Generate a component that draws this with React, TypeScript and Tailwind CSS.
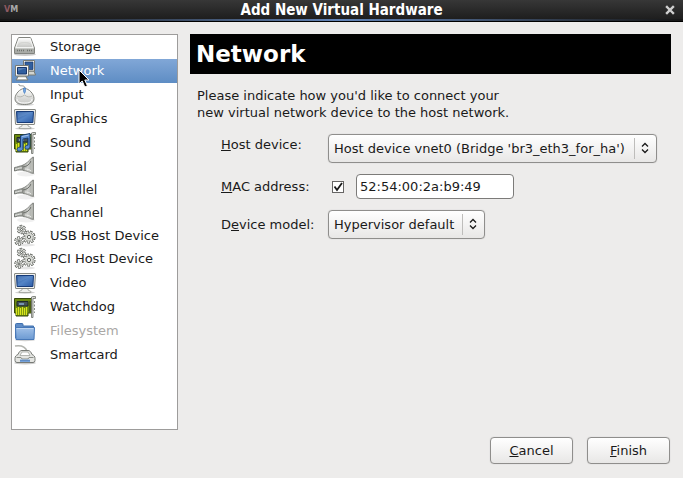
import type { ReactNode } from "react";
import { clsx } from "clsx";

function Icon({ children }: { children: ReactNode }) {
  return (
    <svg viewBox="0 0 22 22" className="h-[22px] w-[22px] shrink-0 overflow-visible" aria-hidden="true">
      {children}
    </svg>
  );
}

function Gradients() {
  return (
    <svg className="absolute h-0 w-0" aria-hidden="true">
      <defs>
        <linearGradient id="metal" x1="0" y1="0" x2="0" y2="1">
          <stop offset="0" stopColor="#fcfcfb" />
          <stop offset="1" stopColor="#c4c5c2" />
        </linearGradient>
        <linearGradient id="screen" x1="0" y1="0" x2="1" y2="1">
          <stop offset="0" stopColor="#2a569b" />
          <stop offset="0.5" stopColor="#5585c6" />
          <stop offset="1" stopColor="#2c5ba6" />
        </linearGradient>
        <linearGradient id="plug" x1="0" y1="0" x2="1" y2="0">
          <stop offset="0" stopColor="#8f918c" />
          <stop offset="0.5" stopColor="#cfd0cd" />
          <stop offset="1" stopColor="#9b9d98" />
        </linearGradient>
        <linearGradient id="folder" x1="0" y1="0" x2="0" y2="1">
          <stop offset="0" stopColor="#a0c0e8" />
          <stop offset="1" stopColor="#6c9ad2" />
        </linearGradient>
      </defs>
    </svg>
  );
}

function DriveIcon() {
  return (
    <Icon>
      <ellipse cx="11" cy="18.5" rx="11" ry="1.5" fill="#000" opacity="0.2" />
      <path d="M4 2.500q.3-1 1-1h11q.7 0 1 1L20.500 12v5.500H.5V12z" fill="#e6e7e4" stroke="#82847f" />
      <path d="M5 2.500h11.200l2.800 9H2z" fill="url(#metal)" stroke="#fff" strokeWidth="0.7" />
      <path d="M4.500 10c0-3 3-3.500 6-3.500s6.500.5 6.500 3.500" fill="none" stroke="#d1d2cf" />
      <path d="M1 12.500h19V17H1z" fill="#a9aba7" />
      <path d="M3 14.500h8M13 14.500h5" stroke="#70736e" strokeWidth="1.500" strokeDasharray="1 1" />
    </Icon>
  );
}

function NetworkIcon() {
  return (
    <Icon>
      <path d="M14 11h6l1.500 4H14z" fill="#d3d5d0" stroke="#777a74" />
      <path d="M9.500.5h11v10.500h-11z" fill="#f2f2ef" stroke="#777a74" />
      <path d="M11 2h8v7.500h-8z" fill="#315f9f" stroke="#17366b" strokeWidth="0.7" />
      <path d="M4.500 16h7l2.500 4H2z" fill="#e5e6e2" stroke="#777a74" />
      <path d="M1.500 5.500h13v10.500h-13z" fill="#f5f5f2" stroke="#777a74" />
      <path d="M3.500 7.500h9v6.500h-9z" fill="#315f9f" stroke="#17366b" />
      <path d="M4 8h8L4 11z" fill="#7096c8" opacity="0.6" />
      <path d="M4 18.500h8" stroke="#fff" />
    </Icon>
  );
}

function MouseIcon() {
  return (
    <Icon>
      <ellipse cx="11" cy="20.500" rx="9" ry="1.500" fill="#000" opacity="0.15" />
      <path d="M5 0c-1 3.500 5.500 0 6 4" fill="none" stroke="#8c8e89" />
      <path
        d="M10.500 4.500C6 4.500 1 10 1 14.500c0 4.500 3.500 6 9.500 6s9.500-1.500 9.500-6c0-4.500-5-10-9.500-10z"
        fill="url(#metal)"
        stroke="#82847f"
      />
      <path d="M3 12c2.500 1.500 5 1 7.500-1 2.500 2 5 2.500 7.500 1" fill="none" stroke="#a9aba6" strokeWidth="0.800" />
      <path d="M3 15c0 3 3 4 7.500 4s7.500-1 7.500-4" fill="none" stroke="#fff" />
      <path d="M9.500 4h2v3.500l-1 2-1-2z" fill="#70a2e0" stroke="#4079bd" strokeWidth="0.600" />
    </Icon>
  );
}

function MonitorIcon() {
  return (
    <Icon>
      <ellipse cx="11" cy="20.500" rx="10" ry="1.200" fill="#000" opacity="0.18" />
      <path d="M8 16h6v2l3 1.500v1H5v-1L8 18z" fill="#eeefec" stroke="#9b9d98" strokeWidth="0.8" />
      <path d="M1 1.500h20q.5 0 .5.5l-1 14q0 .5-.5.5H2q-.5 0-.5-.5L.5 2q0-.5.5-.5z" fill="#f2f2ef" stroke="#858782" />
      <path d="M2.500 3.500h17l-.6 11H3.100z" fill="url(#screen)" stroke="#173b78" />
      <path d="M3.500 4.300h15L4 10z" fill="#7ba2d8" opacity="0.35" />
    </Icon>
  );
}

function CardBody() {
  return (
    <>
      <path d="M.5 2.500h17v14.500H14v3H2v-3H.5z" fill="#6c8a10" stroke="#37480b" />
      <path d="M2.500 12v7M4.500 11v8M6.500 12v7M8.500 11v8M10.500 12v7M12.500 11v8" stroke="#d9e51d" strokeWidth="1.200" />
      <path d="M3 5.500h11v4.500H3z" fill="#465457" stroke="#1e292b" />
      <path d="M5 7h5v2H5z" fill="#7695b3" />
      <path d="M15 5h2v11h-2z" fill="#4b5f12" />
      <path d="M17.500 1v20.500h1.500V2.500h2.500V.5h-3z" fill="#d6d8d3" stroke="#6b6e68" strokeWidth="0.8" />
      <path d="M20.500 5v12" stroke="#888b85" strokeDasharray="2 1.500" />
    </>
  );
}

function WatchdogIcon() {
  return (
    <Icon>
      <CardBody />
    </Icon>
  );
}

function SoundIcon() {
  return (
    <Icon>
      <CardBody />
      <path
        d="M6.500 3.500l9.500-2v13c0 3-5 3.700-5 1 0-2 2-2.600 3-2.300V6l-5 1v9.500c0 3-6 3.700-6 1 0-2 2.500-2.600 3.500-2.300z"
        fill="#5b8dd0"
        stroke="#1c3f73"
      />
      <path d="M8 4.500l6.500-1.300" stroke="#a8c5ea" />
    </Icon>
  );
}

function PlugIcon() {
  return (
    <Icon>
      <ellipse cx="12" cy="18" rx="9" ry="2.500" fill="#000" opacity="0.06" />
      <path d="M.5 11.500c3-.2 5-2 8.500-1.800l2 4.300c-4 .3-6-.6-10.500 1z" fill="#a7aaa5" stroke="#656863" strokeWidth="0.800" />
      <path d="M1 13.300c4-.8 5-1.600 8-1.600" stroke="#e5e6e3" fill="none" />
      <path d="M8 9.500c4-1.500 7-4.500 10-8l1.500-.5v16.500L17 17c-2-1-4-2-8-2.500z" fill="url(#plug)" stroke="#7b7e78" strokeWidth="0.800" />
      <path d="M9 11c4-.5 6.500-2.500 8-6" fill="none" stroke="#6b6e69" />
      <path d="M11 13c2.500 0 4.500.5 6 2" fill="none" stroke="#ecedea" />
      <path d="M18 3v13" stroke="#c6c8c3" />
    </Icon>
  );
}

function Gear({ x, y, r, teeth }: { x: number; y: number; r: number; teeth: number }) {
  const ring = { cx: x, cy: y, r, fill: "none", pathLength: teeth * 2 };

  return (
    <g>
      <circle {...ring} stroke="#555852" strokeWidth="3.400" strokeDasharray="1.400 0.600" />
      <circle cx={x} cy={y} r={r - 0.5} fill="#d9dbd6" stroke="#6c6f69" strokeWidth="0.800" />
      <circle {...ring} stroke="#f0f1ee" strokeWidth="2" strokeDasharray="0.800 1.200" strokeDashoffset="-0.300" />
      <circle cx={x} cy={y} r={r / 3} fill="#fff" stroke="#3f423c" strokeWidth="0.800" />
    </g>
  );
}

function GearsIcon() {
  return (
    <Icon>
      <ellipse cx="12" cy="20" rx="9" ry="1.500" fill="#000" opacity="0.1" />
      <Gear x={7.5} y={4.5} r={3} teeth={6} />
      <Gear x={5} y={16} r={3} teeth={6} />
      <Gear x={15} y={12} r={4.8} teeth={9} />
    </Icon>
  );
}

function FolderIcon() {
  return (
    <Icon>
      <ellipse cx="11" cy="20" rx="10" ry="1.200" fill="#000" opacity="0.18" />
      <path d="M1.500 18V4.500q0-1 1-1H8q1 0 1 1V6h10.500v12z" fill="#5f8cc6" stroke="#3f70af" />
      <path d="M1.500 7.500h19L20 19.500H2z" fill="url(#folder)" stroke="#4778b8" />
      <path d="M2.700 8.500h16.600" stroke="#c1d7f1" />
    </Icon>
  );
}

function SmartcardIcon() {
  return (
    <Icon>
      <ellipse cx="11" cy="19" rx="11" ry="1.500" fill="#000" opacity="0.2" />
      <path d="M1 2c6-1 10 0 12 5" fill="none" stroke="#b2b4af" strokeWidth="1.600" />
      <path
        d="M8 6.500h6c2 0 3 1.500 4 4 2 .8 3 2 3 4v2q0 2-2 2H3q-2 0-2-2v-2c0-2 1-3.200 3-4 1-2.500 2-4 4-4z"
        fill="#e4e5e2"
        stroke="#777a75"
      />
      <path d="M8 8h6l2 3.500H6z" fill="#fff" stroke="#999c96" strokeWidth="0.7" />
      <path d="M2.500 13.500H7l1 1.500h6l1-1.500h4.500" fill="none" stroke="#8b8e89" />
      <path d="M6 15.500h10v2.500H6z" fill="#80abe0" />
      <path d="M6.500 16.700h9" stroke="#335f9c" strokeDasharray="1 1" />
    </Icon>
  );
}

type Device = {
  name: string;
  icon: () => ReactNode;
  compact?: boolean;
  disabled?: boolean;
};

const devices: Device[] = [
  { name: "Storage", icon: DriveIcon },
  { name: "Network", icon: NetworkIcon },
  { name: "Input", icon: MouseIcon },
  { name: "Graphics", icon: MonitorIcon },
  { name: "Sound", icon: SoundIcon },
  { name: "Serial", icon: PlugIcon, compact: true },
  { name: "Parallel", icon: PlugIcon, compact: true },
  { name: "Channel", icon: PlugIcon, compact: true },
  { name: "USB Host Device", icon: GearsIcon, compact: true },
  { name: "PCI Host Device", icon: GearsIcon },
  { name: "Video", icon: MonitorIcon },
  { name: "Watchdog", icon: WatchdogIcon },
  { name: "Filesystem", icon: FolderIcon, disabled: true },
  { name: "Smartcard", icon: SmartcardIcon },
];

function Pointer() {
  return (
    <svg viewBox="0 0 12 19" className="absolute top-2.5 left-[66px] z-10 h-[19px] w-3" aria-hidden="true">
      <path d="M1 1v14l3.200-3 2.600 6 2.600-1.200L6.800 11H11z" fill="#000" stroke="#fff" />
    </svg>
  );
}

function DeviceList() {
  const selected = "Network";

  return (
    <ul className="w-[167px] shrink-0 border border-[#9d9c9b] bg-white">
      {devices.map(({ name, icon: DeviceIcon, compact, disabled }) => (
        <li key={name} className="relative">
          <button
            type="button"
            disabled={disabled}
            className={clsx(
              "flex w-full items-center gap-3.5 pl-0.5 text-left leading-[18px] whitespace-nowrap",
              compact ? "h-[23px]" : "h-6",
              name === selected && "bg-linear-to-b from-[#81a7d7] to-[#5e8dc4] text-white",
              disabled && "text-[#aaa8a6]"
            )}
          >
            <DeviceIcon />
            {name}
          </button>
          {name === selected && <Pointer />}
        </li>
      ))}
    </ul>
  );
}

function ComboBox({ id, value, className }: { id: string; value: string; className: string }) {
  return (
    <div className={clsx("relative h-[29px] max-w-full", className)}>
      <select
        id={id}
        className="h-full w-full appearance-none rounded border border-[#8f8e8c] bg-linear-to-b from-white to-[#e8e7e6] pr-6 pl-[5px] shadow-[0_0_1px_#b5b4b2]"
      >
        <option>{value}</option>
      </select>
      <span className="pointer-events-none absolute top-1 right-[22px] bottom-1 w-px bg-[#bebdbb]" />
      <svg viewBox="0 0 8 12" className="pointer-events-none absolute top-2 right-2 h-3 w-2" aria-hidden="true">
        <path d="M1 4.500l3-3 3 3M1 7.500l3 3 3-3" fill="none" stroke="#1a1a1a" strokeWidth="1.300" />
      </svg>
    </div>
  );
}

function NetworkForm() {
  return (
    <form className="grid grid-cols-[107px_1fr] items-center gap-y-[11px] pt-[13px] pl-[31px]">
      <label htmlFor="host-device" className="self-start pt-0.5">
        <u>H</u>ost device:
      </label>
      <ComboBox id="host-device" value="Host device vnet0 (Bridge 'br3_eth3_for_ha')" className="w-[329px]" />

      <label htmlFor="mac-address">
        <u>M</u>AC address:
      </label>
      <div className="flex items-center gap-3 pl-1">
        <span className="relative flex">
          <input
            type="checkbox"
            defaultChecked
            aria-label="Set MAC address"
            className="peer h-3 w-3 appearance-none border border-[#666564] bg-white"
          />
          <svg
            viewBox="0 0 12 12"
            className="pointer-events-none absolute inset-0 hidden h-3 w-3 peer-checked:block"
            aria-hidden="true"
          >
            <path d="M2.500 5.500l2.500 3.500 5-7" fill="none" stroke="#1a1a1a" strokeWidth="1.800" />
          </svg>
        </span>
        <input
          id="mac-address"
          type="text"
          defaultValue="52:54:00:2a:b9:49"
          className="h-[25px] w-[158px] rounded border border-[#7c7b79] bg-white px-[3px]"
        />
      </div>

      <label htmlFor="device-model">
        D<u>e</u>vice model:
      </label>
      <ComboBox id="device-model" value="Hypervisor default" className="w-[157px]" />
    </form>
  );
}

function DialogButton({ children }: { children: ReactNode }) {
  return (
    <button
      type="button"
      className="h-[27px] w-[83px] rounded border border-[#8f8e8c] bg-linear-to-b from-white to-[#e8e7e6] shadow-[0_0_1px_#b5b4b2]"
    >
      {children}
    </button>
  );
}

function TitleBar() {
  return (
    <header>
      <div className="grid h-[19px] grid-cols-[1fr_auto_1fr] items-center bg-linear-to-b from-[#373737] to-[#1e1e1e] px-1">
        <span className="text-[8px] leading-none font-bold text-[#a9a9a9]" aria-hidden="true">
          <span className="text-[#8f5a62]">V</span>M
        </span>
        <h1 className="font-['DejaVu_Sans_Condensed','DejaVu_Sans',sans-serif] text-[15px] leading-[18px] font-bold text-white">
          Add New Virtual Hardware
        </h1>
        <button type="button" aria-label="Close" className="mr-1 justify-self-end">
          <svg viewBox="0 0 10 10" className="h-2.5 w-2.5">
            <path d="M2 2l6 6M8 2l-6 6" stroke="#d0d0d0" strokeWidth="2.400" strokeLinecap="square" />
          </svg>
        </button>
      </div>
      <div className="h-0.5 bg-linear-to-r from-[#161616] via-[#6284b8] to-[#161616]" />
      <div className="h-px bg-black" />
    </header>
  );
}

export default function App() {
  return (
    <div className="flex min-h-screen flex-col bg-[#edeceb] font-['DejaVu_Sans',sans-serif] text-[13px] leading-[17px] text-[#1a1a1a]">
      <Gradients />
      <TitleBar />

      <main className="flex flex-1 gap-3 px-[11px] pt-3">
        <DeviceList />
        <section className="min-w-0 flex-1 pr-px">
          <h2 className="flex h-10 items-center bg-black px-1.5 text-[23px] font-bold text-white">Network</h2>
          <p className="px-[7px] pt-[13px]">
            Please indicate how you'd like to connect your
            <br />
            new virtual network device to the host network.
          </p>
          <NetworkForm />
        </section>
      </main>

      <footer className="flex justify-end gap-3.5 px-[13px] pt-[7px] pb-3.5">
        <DialogButton>
          <u>C</u>ancel
        </DialogButton>
        <DialogButton>
          <u>F</u>inish
        </DialogButton>
      </footer>
    </div>
  );
}
